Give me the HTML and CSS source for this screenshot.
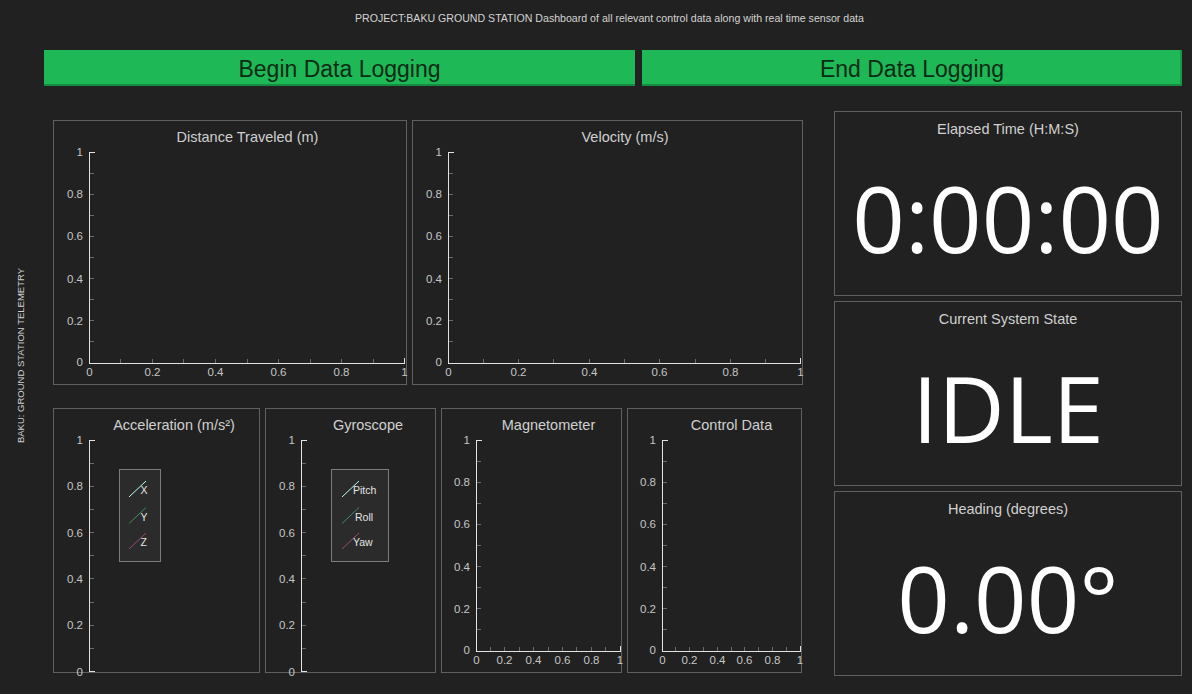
FILE: index.html
```html
<!DOCTYPE html>
<html>
<head>
<meta charset="utf-8">
<link rel="stylesheet" href="styles.css">
</head>
<body>
<div class="app">
  <aside class="side"><span class="side-label">BAKU: GROUND STATION TELEMETRY</span></aside>
  <main class="main">
    <header class="header">PROJECT:BAKU GROUND STATION Dashboard of all relevant control data along with real time sensor data</header>
    <div class="buttons">
      <button class="btn">Begin Data Logging</button>
      <button class="btn btn-end">End Data Logging</button>
    </div>
    <div class="content">
      <section class="charts">
        <div class="row-top">
          <div class="chart">
            <div class="chart-title">Distance Traveled (m)</div>
            <svg class="plot" width="352" height="238" viewBox="0 0 352 238">
              <path class="tick" d="M36 27.5h4M36 48.5h4M36 69.5h4M36 90.5h4M36 111.5h4M36 132.5h4M36 153.5h4M36 174.5h4M36 195.5h4M66.5 217v-4M98.5 217v-4M129.5 217v-4M161.5 217v-4M193.5 217v-4M224.5 217v-4M256.5 217v-4M287.5 217v-4M319.5 217v-4"/>
              <path class="axis" d="M35.5 6V217.5H351M35.5 6.5h5M350.5 217v-5"/>
              <g class="ylab"><text x="29" y="6">1</text><text x="29" y="48.2">0.8</text><text x="29" y="90.4">0.6</text><text x="29" y="132.6">0.4</text><text x="29" y="174.8">0.2</text><text x="29" y="216">0</text></g>
              <g class="xlab"><text x="35.5" y="226">0</text><text x="98.5" y="226">0.2</text><text x="161.5" y="226">0.4</text><text x="224.5" y="226">0.6</text><text x="287.5" y="226">0.8</text><text x="350.5" y="226">1</text></g>
            </svg>
          </div>
          <div class="chart">
            <div class="chart-title">Velocity (m/s)</div>
            <svg class="plot" width="389" height="238" viewBox="0 0 389 238">
              <path class="tick" d="M36 27.5h4M36 48.5h4M36 69.5h4M36 90.5h4M36 111.5h4M36 132.5h4M36 153.5h4M36 174.5h4M36 195.5h4M70.5 217v-4M105.5 217v-4M140.5 217v-4M176.5 217v-4M211.5 217v-4M246.5 217v-4M282.5 217v-4M317.5 217v-4M352.5 217v-4"/>
              <path class="axis" d="M35.5 6V217.5H388M35.5 6.5h5M387.5 217v-5"/>
              <g class="ylab"><text x="29" y="6">1</text><text x="29" y="48.2">0.8</text><text x="29" y="90.4">0.6</text><text x="29" y="132.6">0.4</text><text x="29" y="174.8">0.2</text><text x="29" y="216">0</text></g>
              <g class="xlab"><text x="35.5" y="226">0</text><text x="105.5" y="226">0.2</text><text x="176.5" y="226">0.4</text><text x="246.5" y="226">0.6</text><text x="317.5" y="226">0.8</text><text x="387.5" y="226">1</text></g>
            </svg>
          </div>
        </div>
        <div class="row-bottom">
          <div class="chart">
            <div class="chart-title">Acceleration (m/s²)</div>
            <svg class="plot" width="205" height="238" viewBox="0 0 205 238">
              <path class="tick" d="M36 29.5h4M36 52.5h4M36 75.5h4M36 98.5h4M36 121.5h4M36 144.5h4M36 168.5h4M36 191.5h4M36 214.5h4"/>
              <path class="axis" d="M35.5 6V238M35.5 6.5h5M35.5 237.5h5"/>
              <g class="ylab"><text x="29" y="6">1</text><text x="29" y="52.3">0.8</text><text x="29" y="98.6">0.6</text><text x="29" y="144.9">0.4</text><text x="29" y="191.2">0.2</text><text x="29" y="237.5">0</text></g>
              <g class="legend">
                <rect x="65.5" y="35.5" width="41" height="92"/>
                <path class="ln ln-a" d="M75 63L92 47"/>
                <path class="ln ln-b" d="M75 89.5L92 73.5"/>
                <path class="ln ln-c" d="M75 115L92 99"/>
                <text x="86.5" y="56">X</text>
                <text x="86.5" y="82.5">Y</text>
                <text x="86.5" y="108">Z</text>
              </g>
            </svg>
          </div>
          <div class="chart">
            <div class="chart-title">Gyroscope</div>
            <svg class="plot" width="169" height="238" viewBox="0 0 169 238">
              <path class="tick" d="M36 29.5h4M36 52.5h4M36 75.5h4M36 98.5h4M36 121.5h4M36 144.5h4M36 168.5h4M36 191.5h4M36 214.5h4"/>
              <path class="axis" d="M35.5 6V238M35.5 6.5h5M35.5 237.5h5"/>
              <g class="ylab"><text x="29" y="6">1</text><text x="29" y="52.3">0.8</text><text x="29" y="98.6">0.6</text><text x="29" y="144.9">0.4</text><text x="29" y="191.2">0.2</text><text x="29" y="237.5">0</text></g>
              <g class="legend">
                <rect x="65.5" y="35.5" width="57" height="92"/>
                <path class="ln ln-a" d="M76 63L93 47"/>
                <path class="ln ln-b" d="M76 89.5L93 73.5"/>
                <path class="ln ln-c" d="M76 115L93 99"/>
                <text x="87" y="56">Pitch</text>
                <text x="89" y="82.5">Roll</text>
                <text x="87" y="108">Yaw</text>
              </g>
            </svg>
          </div>
          <div class="chart">
            <div class="chart-title chart-title-narrow">Magnetometer</div>
            <svg class="plot" width="179" height="238" viewBox="0 0 179 238">
              <path class="tick" d="M35 27.5h4M35 48.5h4M35 69.5h4M35 90.5h4M35 111.5h4M35 132.5h4M35 153.5h4M35 174.5h4M35 195.5h4M48.5 217v-4M62.5 217v-4M77.5 217v-4M91.5 217v-4M106.5 217v-4M120.5 217v-4M134.5 217v-4M149.5 217v-4M163.5 217v-4"/>
              <path class="axis" d="M34.5 6V217.5H179M34.5 6.5h5M178.5 217v-5"/>
              <g class="ylab"><text x="28" y="6">1</text><text x="28" y="48.2">0.8</text><text x="28" y="90.4">0.6</text><text x="28" y="132.6">0.4</text><text x="28" y="174.8">0.2</text><text x="28" y="216">0</text></g>
              <g class="xlab"><text x="34.5" y="226">0</text><text x="62.5" y="226">0.2</text><text x="91.5" y="226">0.4</text><text x="120.5" y="226">0.6</text><text x="149.5" y="226">0.8</text><text x="178" y="226">1</text></g>
            </svg>
          </div>
          <div class="chart">
            <div class="chart-title chart-title-narrow">Control Data</div>
            <svg class="plot" width="173" height="238" viewBox="0 0 173 238">
              <path class="tick" d="M35 27.5h4M35 48.5h4M35 69.5h4M35 90.5h4M35 111.5h4M35 132.5h4M35 153.5h4M35 174.5h4M35 195.5h4M47.5 217v-4M61.5 217v-4M75.5 217v-4M89.5 217v-4M103.5 217v-4M116.5 217v-4M130.5 217v-4M144.5 217v-4M158.5 217v-4"/>
              <path class="axis" d="M34.5 6V217.5H173M34.5 6.5h5M172.5 217v-5"/>
              <g class="ylab"><text x="28" y="6">1</text><text x="28" y="48.2">0.8</text><text x="28" y="90.4">0.6</text><text x="28" y="132.6">0.4</text><text x="28" y="174.8">0.2</text><text x="28" y="216">0</text></g>
              <g class="xlab"><text x="34.5" y="226">0</text><text x="61.5" y="226">0.2</text><text x="89.5" y="226">0.4</text><text x="116.5" y="226">0.6</text><text x="144.5" y="226">0.8</text><text x="172" y="226">1</text></g>
            </svg>
          </div>
        </div>
      </section>
      <section class="stats">
        <div class="stat">
          <div class="stat-title">Elapsed Time (H:M:S)</div>
          <div class="stat-value">0:00:00</div>
        </div>
        <div class="stat">
          <div class="stat-title">Current System State</div>
          <div class="stat-value">IDLE</div>
        </div>
        <div class="stat">
          <div class="stat-title">Heading (degrees)</div>
          <div class="stat-value">0.00°</div>
        </div>
      </section>
    </div>
  </main>
</div>
</body>
</html>
```

FILE: styles.css
```css
* { box-sizing: border-box; }

html, body {
  margin: 0;
  padding: 0;
}

body {
  width: 1192px;
  height: 694px;
  overflow: hidden;
  background: #212121;
  color: #d2d2d2;
  font-family: "Liberation Sans", Arial, sans-serif;
}

.app {
  display: flex;
  height: 694px;
}

.side {
  width: 36px;
  flex: none;
  display: flex;
  align-items: center;
  justify-content: center;
  padding: 18px 0 0 4px;
}

.side-label {
  writing-mode: vertical-rl;
  transform: rotate(180deg);
  font-size: 9.5px;
  color: #d0d0d0;
  white-space: nowrap;
}

.main {
  flex: 1;
  padding: 0 10px 0 8px;
}

.header {
  padding: 12px 7px 0 0;
  height: 25px;
  line-height: 13px;
  margin-bottom: 25px;
  text-align: center;
  font-size: 10.6px;
  color: #d4d4d4;
  white-space: nowrap;
}

.buttons {
  display: grid;
  grid-template-columns: 591px 540px;
  column-gap: 7px;
  height: 36px;
}

.btn {
  border: none;
  border-bottom: 2px solid #168c41;
  background: #1fb856;
  color: #0c2a14;
  font-family: "Liberation Sans", Arial, sans-serif;
  font-size: 23px;
  padding: 4px 0 0;
  margin: 0;
  display: flex;
  align-items: center;
  justify-content: center;
}

.btn-end {
  box-shadow: inset -2px 0 0 #169b45;
}

.content {
  display: flex;
}

.charts {
  width: 750px;
  margin: 34px 0 0 9px;
  display: flex;
  flex-direction: column;
  gap: 23px;
}

.row-top {
  display: grid;
  grid-template-columns: 354px 391px;
  column-gap: 5px;
  height: 265px;
}

.row-bottom {
  display: grid;
  grid-template-columns: 207px 171px 181px 175px;
  column-gap: 5px;
  height: 265px;
}

.chart {
  border: 1px solid #5f5f5f;
  display: flex;
  flex-direction: column;
  min-width: 0;
}

.chart-title {
  height: 25px;
  padding: 8px 0 0 35px;
  line-height: 16px;
  text-align: center;
  font-size: 14.5px;
  color: #d0d0d0;
  white-space: nowrap;
}

.chart-title-narrow {
  padding-left: 34px;
}

.plot {
  display: block;
  overflow: visible;
  font-family: "Liberation Sans", Arial, sans-serif;
}

.plot .tick {
  stroke: #6a6a6a;
  stroke-width: 1;
  fill: none;
  shape-rendering: crispEdges;
}

.plot .axis {
  stroke: #e2e2e2;
  stroke-width: 1;
  fill: none;
  shape-rendering: crispEdges;
}

.plot text {
  font-size: 11.5px;
  fill: #c6c6c6;
  dominant-baseline: central;
}

.plot .ylab text {
  text-anchor: end;
}

.plot .xlab text {
  text-anchor: middle;
}

.legend rect {
  fill: #2b2b2b;
  stroke: #7c7c7c;
  stroke-width: 1;
  shape-rendering: crispEdges;
}

.legend .ln {
  fill: none;
  stroke-width: 1;
}

.legend .ln-a { stroke: #b4fff0; }
.legend .ln-b { stroke: #3f8f62; }
.legend .ln-c { stroke: #9e4a73; }

.legend text {
  font-size: 10.5px;
  fill: #e4e4e4;
}

.stats {
  width: 348px;
  margin: 25px 0 0 31px;
  display: flex;
  flex-direction: column;
  gap: 5px;
}

.stat {
  height: 185px;
  border: 1px solid #5f5f5f;
  display: flex;
  flex-direction: column;
}

.stat-title {
  padding: 9px 0 4px;
  line-height: 16px;
  text-align: center;
  font-size: 14.5px;
  color: #d0d0d0;
}

.stat-value {
  flex: 1;
  display: flex;
  align-items: center;
  justify-content: center;
  font-family: "Open Sans", "Noto Sans", sans-serif;
  font-size: 92px;
  line-height: 1;
  color: #ffffff;
}
```
